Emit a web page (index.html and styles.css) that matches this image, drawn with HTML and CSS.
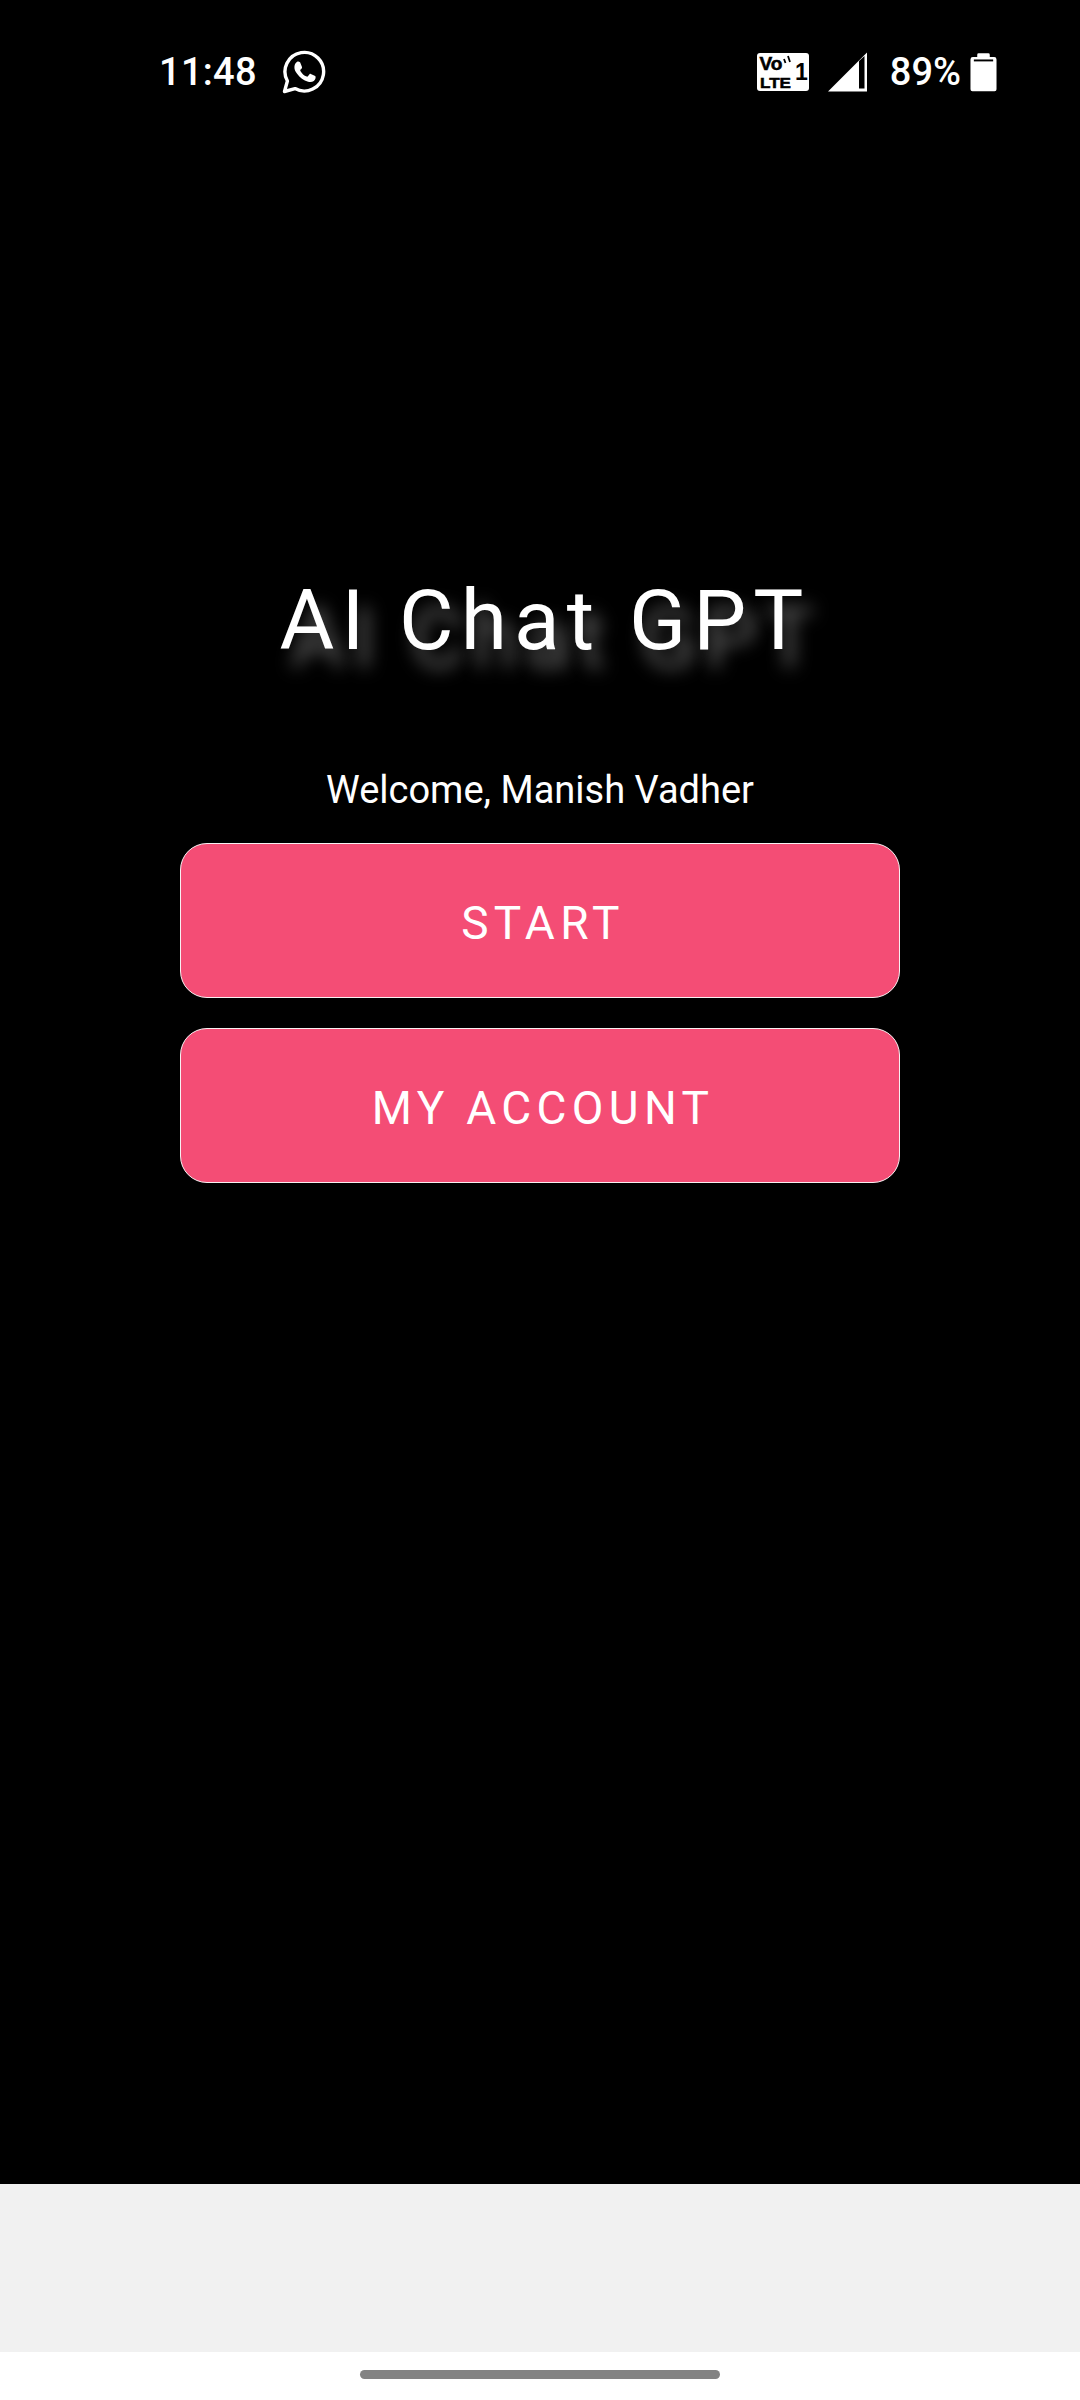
FILE: index.html
```html
<!DOCTYPE html>
<html lang="en">
<head>
<meta charset="utf-8">
<title>AI Chat GPT</title>
<link rel="stylesheet" href="styles.css">
</head>
<body>
<div class="screen">
  <header class="status">
    <div class="status-left">
      <span class="time">11:48</span>
      <svg class="wa" viewBox="0 0 44 44" width="44" height="44">
        <path d="M2.5 41.5 L5.4 31 A19.3 19.3 0 1 1 13 38.6 Z" fill="none" stroke="#fff" stroke-width="3.4" stroke-linejoin="round"/>
        <path d="M15.6 11.6c.5 0 1 0 1.4.1.5 0 .9.2 1.200.9l1.700 4.100c.2.4.2.8 0 1.200-.3.600-.8 1.200-1.300 1.700-.4.400-.5.800-.2 1.300 1.500 2.600 3.600 4.500 6.300 5.700.5.200.9.100 1.200-.3.500-.6 1.100-1.400 1.600-2 .3-.5.800-.6 1.300-.4l3.900 1.900c.6.300.9.500.9 1 .1 1.700-.4 3.200-1.800 4.200-1.700 1.200-3.700 1.300-5.700.7-4.600-1.300-8.200-4.100-11-7.900-1.500-2-2.800-4.300-2.700-6.900.1-2 .9-3.600 2.400-4.800.2-.3.500-.5.800-.5z" fill="#fff"/>
      </svg>
    </div>
    <div class="status-right">
      <svg class="volte" viewBox="0 0 52 38" width="52" height="38">
        <rect width="52" height="38" rx="3" fill="#fff"/>
        <text x="2.500" y="16.500" class="volte-vo" textLength="23" lengthAdjust="spacingAndGlyphs">Vo</text>
        <text x="3" y="34.500" class="volte-lte" textLength="31" lengthAdjust="spacingAndGlyphs">LTE</text>
        <path d="M27 6l1.500 4M31 3l2 6" stroke="#000" stroke-width="1.800" fill="none"/>
        <text x="38" y="27" class="volte-n">1</text>
      </svg>
      <svg class="signal" viewBox="0 0 40 40" width="40" height="40">
        <path d="M0 39.500 L39 0.500 V39.500 Z" fill="#fff"/>
        <path d="M31 9 L36.500 4 V36.500 H31 Z" fill="#000"/>
      </svg>
      <span class="batt-text">89%</span>
      <svg class="battery" viewBox="0 0 28 40" width="27" height="40">
        <path d="M8 0.500h11a1.500 1.500 0 0 1 1.500 1.500v2.500h4.500a2.500 2.500 0 0 1 2.500 2.500v31a2 2 0 0 1-2 2h-23a2 2 0 0 1-2-2v-31a2.500 2.500 0 0 1 2.500-2.500h4.500v-2.500a1.500 1.500 0 0 1 1.500-1.500z" fill="#fff"/>
        <rect x="4" y="7" width="20" height="2" fill="#000"/>
      </svg>
    </div>
  </header>
  <main class="content">
    <h1 class="title">AI Chat GPT</h1>
    <p class="welcome">Welcome, Manish Vadher</p>
    <button class="btn btn-first">START</button>
    <button class="btn">MY ACCOUNT</button>
  </main>
  <div class="ad-band"></div>
  <footer class="nav"><div class="pill"></div></footer>
</div>
</body>
</html>
```
FILE: styles.css
```css
* { box-sizing: border-box; }
html, body { margin: 0; padding: 0; background: #000; }
body { width: 1080px; height: 2400px; overflow: hidden; font-family: Roboto, "Liberation Sans", sans-serif; color: #fff; }
.screen { display: flex; flex-direction: column; width: 1080px; height: 2400px; }
.status { flex: none; height: 144px; display: flex; justify-content: space-between; align-items: flex-start; padding: 50px 83px 0 159px; }
.status-left { display: flex; align-items: center; gap: 25px; }
.time { font-size: 38px; font-weight: 500; line-height: 44px; letter-spacing: 0.3px; }
.wa { display: block; }
.status-right { display: flex; align-items: center; height: 44px; }
.volte { display: block; margin-right: 19px; }
.volte-vo { font: 700 18px "Liberation Sans", sans-serif; fill: #000; stroke: #000; stroke-width: .5px; }
.volte-lte { font: 700 15px "Liberation Sans", sans-serif; fill: #000; stroke: #000; stroke-width: .5px; }
.volte-n { font: 700 23px "Liberation Sans", sans-serif; fill: #000; }
.signal { display: block; margin-right: 22px; }
.batt-text { font-size: 38px; line-height: 44px; font-weight: 500; margin-right: 9px; }
.battery { display: block; }
.content { flex: 1; display: flex; flex-direction: column; align-items: center; padding-top: 428px; }
.title { margin: 0; padding-left: 10px; font-size: 84px; line-height: 98px; font-weight: 400; letter-spacing: 7px; text-shadow: 11px 18px 18px rgba(255,255,255,.4); }
.welcome { margin: 98px 0 0; font-size: 38px; line-height: 45px; }
.btn { display: block; width: 720px; height: 155px; background: #f44d75; border: 1.500px solid #f8f0f2; border-radius: 27px; color: #fff; font-family: inherit; font-size: 46px; letter-spacing: 5.300px; margin-top: 30px; padding: 5px 0 0 6px; }
.btn-first { margin-top: 30px; }
.ad-band { flex: none; height: 168px; background: #f1f1f1; }
.nav { flex: none; height: 48px; background: #fff; padding-top: 18px; display: flex; justify-content: center; }
.pill { width: 360px; height: 9px; border-radius: 5px; background: #838383; }
```
